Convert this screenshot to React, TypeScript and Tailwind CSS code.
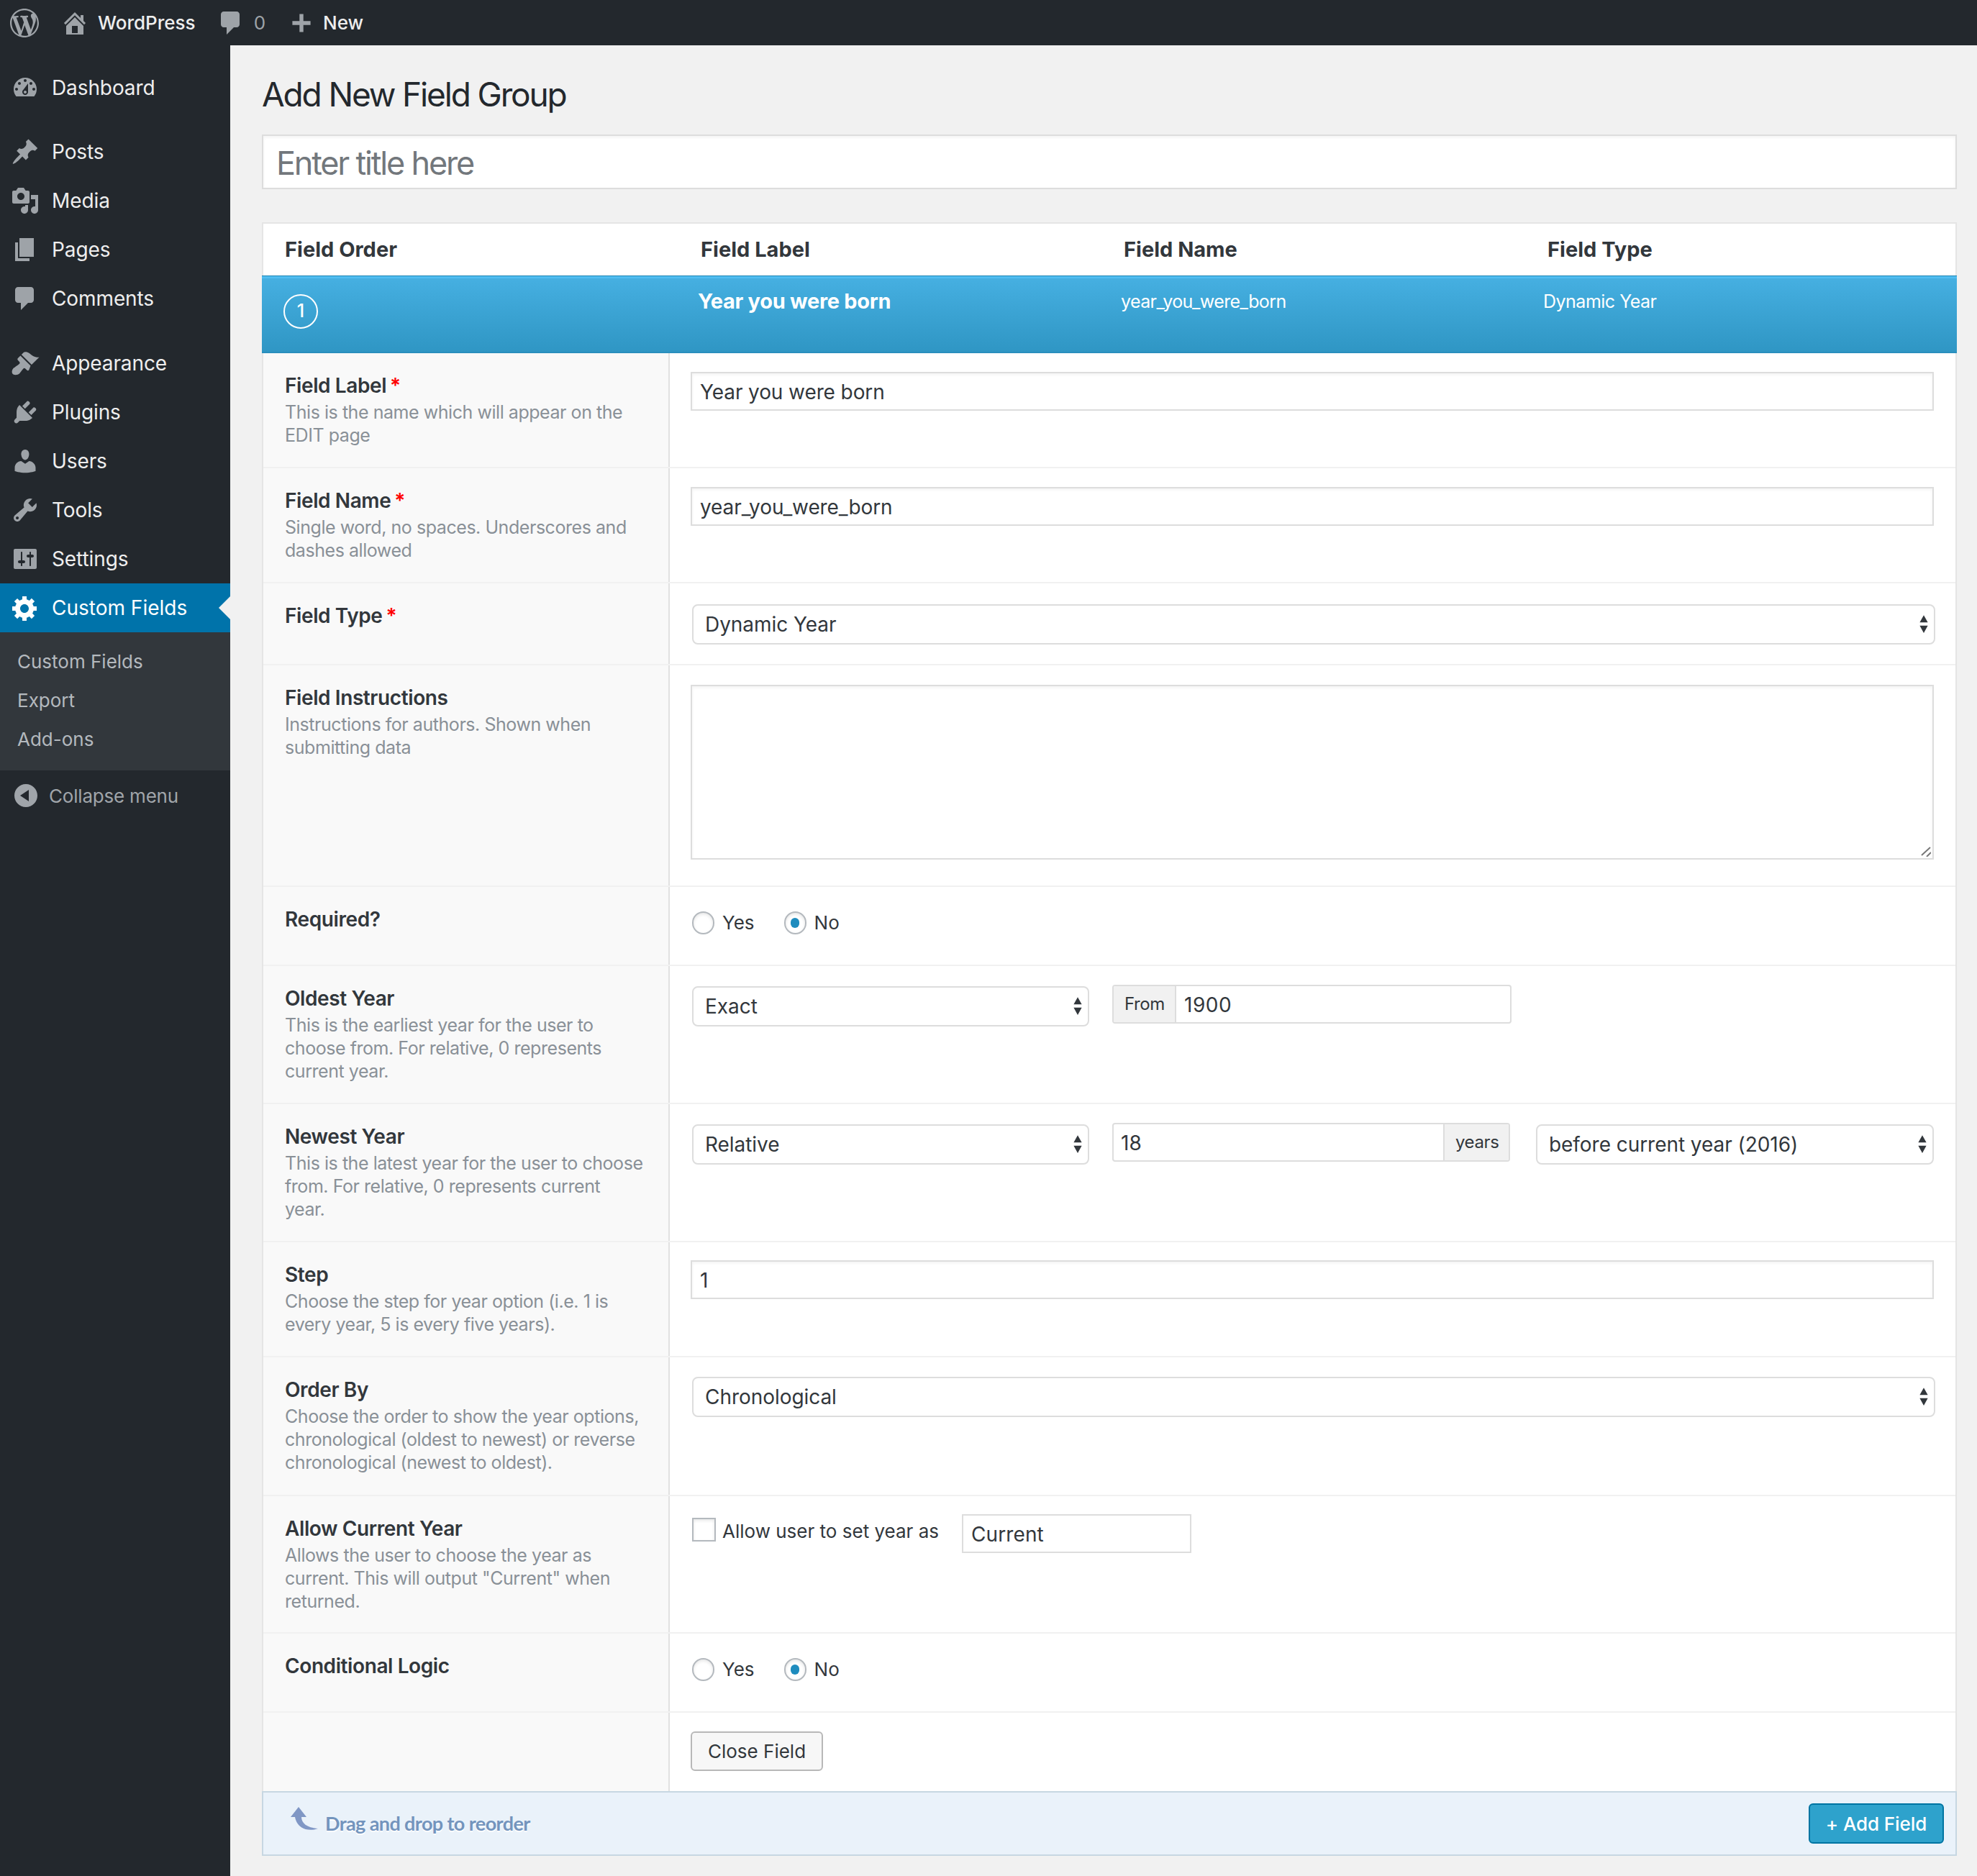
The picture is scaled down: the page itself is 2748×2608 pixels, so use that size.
import React from 'react';

const paths: Record<string, string> = {
  wordpress:
    'M20 10c0-5.51-4.49-10-10-10C4.48 0 0 4.49 0 10c0 5.52 4.48 10 10 10 5.51 0 10-4.48 10-10zM7.78 15.37L4.37 6.22c.55-.02 1.17-.08 1.17-.08.5-.06.44-1.13-.06-1.11 0 0-1.45.11-2.37.11-.18 0-.37 0-.58-.01C4.12 2.69 6.87 1.11 10 1.11c2.33 0 4.45.87 6.05 2.34-.68-.11-1.65.39-1.65 1.58 0 .74.45 1.36.9 2.1.35.61.55 1.36.55 2.46 0 1.49-1.4 5-1.4 5l-3.03-8.37c.54-.02.82-.17.82-.17.5-.05.44-1.25-.06-1.22 0 0-1.44.12-2.38.12-.87 0-2.33-.12-2.33-.12-.5-.03-.56 1.2-.06 1.22l.92.08 1.26 3.41zM17.41 10c.24-.64.74-1.87.43-4.25.7 1.29 1.05 2.71 1.05 4.25 0 3.29-1.73 6.24-4.4 7.78.97-2.59 1.94-5.2 2.92-7.78zM6.1 18.09C3.12 16.65 1.11 13.53 1.11 10c0-1.3.23-2.48.72-3.59C3.25 10.3 4.67 14.2 6.1 18.09zm4.03-6.63l2.58 6.98c-.86.29-1.76.45-2.71.45-.79 0-1.57-.11-2.29-.33.81-2.38 1.62-4.74 2.42-7.1z',
  home: 'M16 8.5l1.53 1.53-1.06 1.06L10 4.62l-6.47 6.47-1.06-1.06L10 2.5l4 4v-2h2v4zm-6-2.46l6 5.99V18H4v-5.97zM12 17v-5H8v5h4z',
  comment: 'M5 2h9c1.1 0 2 .9 2 2v7c0 1.1-.9 2-2 2h-2l-5 5v-5H5c-1.1 0-2-.9-2-2V4c0-1.1.9-2 2-2z',
  plus: 'M17 8.5v3h-5.5V17h-3v-5.5H3v-3h5.5V3h3v5.5H17z',
  dashboard:
    'M3.76 16h12.48c1.1-1.37 1.76-3.11 1.76-5 0-4.42-3.58-8-8-8s-8 3.58-8 8c0 1.89.66 3.63 1.76 5zM10 4c.55 0 1 .45 1 1s-.45 1-1 1-1-.45-1-1 .45-1 1-1zM6 6c.55 0 1 .45 1 1s-.45 1-1 1-1-.45-1-1 .45-1 1-1zm8 0c.55 0 1 .45 1 1s-.45 1-1 1-1-.45-1-1 .45-1 1-1zm-5.37 5.55L12 7v6c0 1.1-.9 2-2 2s-2-.9-2-2c0-.57.24-1.08.63-1.45zM4 10c.55 0 1 .45 1 1s-.45 1-1 1-1-.45-1-1 .45-1 1-1zm12 0c.55 0 1 .45 1 1s-.45 1-1 1-1-.45-1-1 .45-1 1-1zm-5 3c0-.55-.45-1-1-1s-1 .45-1 1 .45 1 1 1 1-.45 1-1z',
  pin: 'M10.44 3.02l1.82-1.82 6.36 6.35-1.83 1.82c-1.05-.68-2.48-.57-3.41.36l-.75.75c-.92.93-1.04 2.35-.35 3.41l-1.83 1.82-2.41-2.41-2.8 2.79c-.42.42-3.38 2.71-3.8 2.29s1.86-3.39 2.28-3.81l2.79-2.79L4.1 9.36l1.83-1.82c1.05.69 2.48.57 3.4-.36l.75-.75c.93-.92 1.05-2.35.36-3.41z',
  media:
    'M13 11V4c0-.55-.45-1-1-1h-1.67L9 1H5L3.67 3H2c-.55 0-1 .45-1 1v7c0 .55.45 1 1 1h10c.55 0 1-.45 1-1zM7 4.5c1.38 0 2.5 1.12 2.5 2.5S8.38 9.5 7 9.5 4.5 8.38 4.5 7 5.62 4.5 7 4.5zM14 6h5v10.5c0 1.38-1.12 2.5-2.5 2.5S14 17.88 14 16.5s1.12-2.5 2.5-2.5c.17 0 .34.02.5.05V9h-3V6zm-4 8.05V13h2v3.5c0 1.38-1.12 2.5-2.5 2.5S7 17.88 7 16.5 8.12 14 9.5 14c.17 0 .34.02.5.05z',
  pages: 'M6 15V2h10v13H6zm-1 1h8v2H3V5h2v11z',
  appearance:
    'M14.48 11.06L7.41 3.99l1.5-1.5c.5-.56 2.3-.47 3.51.32 1.21.8 1.43 1.28 2.91 2.1 1.18.64 2.45 1.26 4.45.85zm-.71.71L6.7 4.7 4.93 6.47c-.39.39-.39 1.02 0 1.41l1.06 1.06c.39.39.39 1.03 0 1.42-.6.6-1.43 1.11-2.21 1.69-.35.26-.7.53-1.01.84C1.43 13.23.28 15.7 1.09 17.1c.8 1.4 3.7 1.22 5.08-.16.31-.31.58-.66.85-1.01.57-.78 1.08-1.61 1.69-2.21.39-.39 1.02-.39 1.41 0l1.06 1.06c.39.39 1.02.39 1.41 0z',
  plugins:
    'M13.11 4.36L9.87 7.6 8 5.73l3.24-3.24c.35-.34 1.05-.2 1.56.32.52.51.66 1.21.31 1.55zm-8 1.77l.91-1.12 9.01 9.01-1.19.84c-.71.71-2.63 1.16-3.82 1.16H6.14L4.9 17.26c-.59.59-1.54.59-2.12 0-.59-.58-.59-1.53 0-2.12l1.24-1.24v-3.88c0-1.13.4-3.19 1.09-3.89zm7.26 3.97l3.24-3.24c.34-.35 1.04-.21 1.55.31.52.51.66 1.21.31 1.55l-3.24 3.25z',
  users:
    'M10 9.25c-2.27 0-2.73-3.44-2.73-3.44C7 4.02 7.82 2 9.97 2c2.16 0 2.98 2.02 2.71 3.81 0 0-.41 3.44-2.68 3.44zm0 2.57L12.72 10c2.39 0 4.52 2.33 4.52 4.53v2.49s-3.65 1.13-7.24 1.13c-3.65 0-7.24-1.13-7.24-1.13v-2.49c0-2.25 1.94-4.48 4.47-4.48z',
  tools:
    'M16.68 9.77c-1.34 1.34-3.3 1.67-4.95.99l-5.41 6.52c-.99.99-2.59.99-3.58 0s-.99-2.59 0-3.57l6.52-5.42c-.68-1.65-.35-3.61.99-4.95 1.28-1.28 3.12-1.62 4.72-1.06l-2.89 2.89 2.82 2.82 2.86-2.87c.53 1.58.18 3.39-1.08 4.69zM3.81 16.21c.4.39 1.04.39 1.43 0 .4-.4.4-1.04 0-1.43-.39-.4-1.03-.4-1.43 0-.39.39-.39 1.03 0 1.43z',
  settings:
    'M18 16V4c0-.55-.45-1-1-1H3c-.55 0-1 .45-1 1v12c0 .55.45 1 1 1h14c.55 0 1-.45 1-1zM8 11h1c.55 0 1 .45 1 1s-.45 1-1 1H8v1.5c0 .28-.22.5-.5.5s-.5-.22-.5-.5V13H6c-.55 0-1-.45-1-1s.45-1 1-1h1V5.5c0-.28.22-.5.5-.5s.5.22.5.5V11zm5-2h-1c-.55 0-1-.45-1-1s.45-1 1-1h1V5.5c0-.28.22-.5.5-.5s.5.22.5.5V7h1c.55 0 1 .45 1 1s-.45 1-1 1h-1v5.5c0 .28-.22.5-.5.5s-.5-.22-.5-.5V9z',
  gear: 'M18 12h-2.18c-.17.7-.44 1.35-.81 1.93l1.54 1.54-2.1 2.1-1.54-1.54c-.58.36-1.23.63-1.91.79V19H8v-2.18c-.68-.16-1.33-.43-1.91-.79l-1.54 1.54-2.12-2.12 1.54-1.54c-.36-.58-.63-1.23-.79-1.91H1V9.03h2.17c.16-.7.44-1.35.8-1.94L2.43 5.55l2.1-2.1 1.54 1.54c.58-.37 1.24-.64 1.93-.81V2h3v2.18c.68.16 1.33.43 1.91.79l1.54-1.54 2.12 2.12-1.54 1.54c.36.59.64 1.24.8 1.94H18V12zm-8.5 1.5c1.66 0 3-1.34 3-3s-1.34-3-3-3-3 1.34-3 3 1.34 3 3 3z',
  collapse: 'M18 10c0-4.42-3.58-8-8-8s-8 3.58-8 8 3.58 8 8 8 8-3.58 8-8zM12 6v8l-6-4z',
};

function Dash({ name, className }: { name: string; className: string }) {
  return (
    <svg viewBox="0 0 20 20" className={className} fill="currentColor">
      <path fillRule="evenodd" d={paths[name]} />
    </svg>
  );
}

function MenuItem({ icon, label }: { icon: string; label: string }) {
  return (
    <div className="flex items-center h-[68px] pl-[15px] text-[#eeeeee] text-[28px] tracking-[-0.1px]">
      <Dash name={icon} className="w-[40px] h-[40px] text-[#9ea3a8] mr-[17px] shrink-0" />
      {label}
    </div>
  );
}

function Sidebar() {
  return (
    <div className="w-[320px] shrink-0 bg-[#23282d] pt-[25px]">
      <MenuItem icon="dashboard" label="Dashboard" />
      <div className="h-[21px]" />
      <MenuItem icon="pin" label="Posts" />
      <MenuItem icon="media" label="Media" />
      <MenuItem icon="pages" label="Pages" />
      <MenuItem icon="comment" label="Comments" />
      <div className="h-[22px]" />
      <MenuItem icon="appearance" label="Appearance" />
      <MenuItem icon="plugins" label="Plugins" />
      <MenuItem icon="users" label="Users" />
      <MenuItem icon="tools" label="Tools" />
      <MenuItem icon="settings" label="Settings" />
      <div className="relative flex items-center h-[68px] pl-[15px] bg-[#0073aa] text-white text-[28px]">
        <Dash name="gear" className="w-[40px] h-[40px] text-white mr-[17px] shrink-0" />
        Custom Fields
        <div className="absolute right-0 top-[18px] w-0 h-0 border-y-[16px] border-y-transparent border-r-[16px] border-r-[#f1f1f1]" />
      </div>
      <div className="bg-[#32373c] pt-[13px] pb-[17px] text-[#b4b9be] text-[26px]">
        <div className="h-[54px] flex items-center pl-[24px]">Custom Fields</div>
        <div className="h-[54px] flex items-center pl-[24px]">Export</div>
        <div className="h-[54px] flex items-center pl-[24px]">Add-ons</div>
      </div>
      <div className="flex items-center h-[70px] pl-[16px] text-[#a0a5aa] text-[26px] tracking-[-0.2px]">
        <Dash name="collapse" className="w-[40px] h-[40px] text-[#a0a5aa] mr-[12px] shrink-0" />
        Collapse menu
      </div>
    </div>
  );
}

function TopBar() {
  return (
    <div className="h-[63px] bg-[#23282d] flex items-center text-[#eeeeee] text-[26px] font-medium shrink-0">
      <Dash name="wordpress" className="w-[40px] h-[40px] text-[#9ea3a8] ml-[14px] shrink-0" />
      <Dash name="home" className="w-[40px] h-[40px] text-[#9ea3a8] ml-[30px] shrink-0" />
      <span className="ml-[12px]">WordPress</span>
      <Dash name="comment" className="w-[40px] h-[40px] text-[#9ea3a8] ml-[29px] shrink-0" />
      <span className="ml-[12px] text-[#9ea3a8] font-normal">0</span>
      <Dash name="plus" className="w-[36px] h-[36px] text-[#9ea3a8] ml-[32px] shrink-0" />
      <span className="ml-[12px]">New</span>
    </div>
  );
}

function Arrows() {
  return (
    <svg viewBox="0 0 12 24" className="absolute right-[9px] top-[14px] w-[14px] h-[27px] text-[#32373c]" fill="currentColor">
      <path d="M6 1l5 9H1zM6 23l-5-9h10z" />
    </svg>
  );
}

function SelectBox({ value, className }: { value: string; className: string }) {
  return (
    <div className={`relative h-[56px] shrink-0 ${className}`}>
      <select
        defaultValue={value}
        className="w-full h-full appearance-none bg-white border-2 border-[#dddddd] rounded-[8px] pl-[16px] text-[28px] tracking-[-0.05px] text-[#32373c]"
      >
        <option>{value}</option>
      </select>
      <Arrows />
    </div>
  );
}

function TextInput({ value }: { value: string }) {
  return (
    <input
      type="text"
      defaultValue={value}
      className="w-full h-[54px] bg-white border-2 border-[#dddddd] shadow-[inset_0_2px_4px_rgba(0,0,0,0.05)] px-[11px] pt-[2px] text-[28px] tracking-[-0.1px] text-[#32373c] outline-none"
    />
  );
}

function Radio({ on, label }: { on?: boolean; label: string }) {
  return (
    <div className="flex items-center">
      <div className="w-[31px] h-[32px] rounded-full border-2 border-[#b4b9be] bg-white flex items-center justify-center shrink-0 shadow-[inset_0_2px_4px_rgba(0,0,0,0.1)]">
        {on && <div className="w-[12px] h-[14px] rounded-full bg-[#1e8cbe]" />}
      </div>
      <span className="ml-[11px] text-[26px] text-[#32373c]">{label}</span>
    </div>
  );
}

function YesNo() {
  return (
    <div className="flex items-center gap-[41px] ml-[2px]">
      <Radio label="Yes" />
      <Radio on label="No" />
    </div>
  );
}

function Row({
  height,
  label,
  required,
  desc,
  pad,
  children,
}: {
  height: string;
  label?: string;
  required?: boolean;
  desc?: string[];
  pad: string;
  children: React.ReactNode;
}) {
  return (
    <div className={`flex border-b-2 border-[#f1f1f1] ${height}`}>
      <div className="w-[565px] shrink-0 bg-[#f9f9f9] border-r-2 border-[#e1e1e1] pl-[30px] pt-[27px]">
        {label && (
          <div className="text-[28px] leading-[36px] font-semibold text-[#32373c] tracking-[-0.4px]">
            {label}
            {required && <span className="text-[#ff0000] ml-[5px]">*</span>}
          </div>
        )}
        {desc && (
          <div className="mt-[3px] text-[25px] leading-[32px] text-[#899097] tracking-[-0.45px]">
            {desc.map((line) => (
              <div key={line}>{line}</div>
            ))}
          </div>
        )}
      </div>
      <div className={`flex-1 min-w-0 bg-white pl-[29px] pr-[30px] ${pad}`}>{children}</div>
    </div>
  );
}

function FieldForm() {
  return (
    <div>
      <Row height="h-[160px]" pad="pt-[26px]" label="Field Label" required desc={['This is the name which will appear on the', 'EDIT page']}>
        <TextInput value="Year you were born" />
      </Row>
      <Row height="h-[160px]" pad="pt-[26px]" label="Field Name" required desc={['Single word, no spaces. Underscores and', 'dashes allowed']}>
        <TextInput value="year_you_were_born" />
      </Row>
      <Row height="h-[114px]" pad="pt-[29px]" label="Field Type" required>
        <SelectBox value="Dynamic Year" className="w-[1728px] ml-[2px]" />
      </Row>
      <Row height="h-[308px]" pad="pt-[27px]" label="Field Instructions" desc={['Instructions for authors. Shown when', 'submitting data']}>
        <div className="relative">
          <textarea className="block w-full h-[243px] resize-none bg-white border-2 border-[#dddddd] shadow-[inset_0_2px_4px_rgba(0,0,0,0.05)] outline-none" />
          <svg viewBox="0 0 14 14" className="absolute right-[4px] bottom-[4px] w-[14px] h-[14px]" stroke="#777777" strokeWidth="2" fill="none">
            <path d="M1 12L13 1M8 14l6-6" />
          </svg>
        </div>
      </Row>
      <Row height="h-[110px]" pad="pt-[30px]" label="Required?">
        <YesNo />
      </Row>
      <Row height="h-[192px]" pad="pt-[26px]" label="Oldest Year" desc={['This is the earliest year for the user to', 'choose from. For relative, 0 represents', 'current year.']}>
        <div className="flex items-start">
          <SelectBox value="Exact" className="w-[552px] ml-[2px] mt-[2px]" />
          <div className="flex h-[54px] w-[555px] ml-[32px] border-2 border-[#dddddd] rounded-[4px] bg-white text-[#32373c] overflow-hidden">
            <div className="w-[87px] bg-[#f1f1f1] border-r-2 border-[#dddddd] flex items-center pl-[15px] text-[24px] tracking-[-0.4px]">From</div>
            <div className="flex items-center pl-[11px] pt-[2px] text-[28px] tracking-[0.5px]">1900</div>
          </div>
        </div>
      </Row>
      <Row height="h-[192px]" pad="pt-[26px]" label="Newest Year" desc={['This is the latest year for the user to choose', 'from. For relative, 0 represents current', 'year.']}>
        <div className="flex items-start">
          <SelectBox value="Relative" className="w-[552px] ml-[2px] mt-[2px]" />
          <div className="flex h-[54px] w-[555px] ml-[32px] border-2 border-[#dddddd] rounded-[4px] bg-white text-[#32373c] overflow-hidden">
            <div className="flex-1 flex items-center pl-[10px] pt-[2px] text-[28px] tracking-[0.1px]">18</div>
            <div className="w-[91px] bg-[#f1f1f1] border-l-2 border-[#dddddd] flex items-center pl-[15px] text-[24px] tracking-[-0.4px]">years</div>
          </div>
          <SelectBox value="before current year (2016)" className="w-[553px] ml-[36px] mt-[2px]" />
        </div>
      </Row>
      <Row height="h-[160px]" pad="pt-[25px]" label="Step" desc={['Choose the step for year option (i.e. 1 is', 'every year, 5 is every five years).']}>
        <TextInput value="1" />
      </Row>
      <Row height="h-[193px]" pad="pt-[27px]" label="Order By" desc={['Choose the order to show the year options,', 'chronological (oldest to newest) or reverse', 'chronological (newest to oldest).']}>
        <SelectBox value="Chronological" className="w-[1728px] ml-[2px]" />
      </Row>
      <Row height="h-[191px]" pad="pt-[25px]" label="Allow Current Year" desc={['Allows the user to choose the year as', 'current. This will output "Current" when', 'returned.']}>
        <div className="flex items-start">
          <div className="w-[33px] h-[33px] mt-[5px] ml-[2px] border-2 border-[#b4b9be] bg-white shrink-0 shadow-[inset_0_2px_4px_rgba(0,0,0,0.1)]" />
          <span className="ml-[9px] mt-[4px] w-[333px] text-[26px] text-[#32373c]">Allow user to set year as</span>
          <input
            type="text"
            defaultValue="Current"
            className="w-[319px] h-[54px] bg-white border-2 border-[#dddddd] px-[11px] pt-[2px] text-[28px] tracking-[0.1px] text-[#32373c] outline-none"
          />
        </div>
      </Row>
      <Row height="h-[110px]" pad="pt-[30px]" label="Conditional Logic">
        <YesNo />
      </Row>
      <div className="flex h-[109px]">
        <div className="w-[565px] shrink-0 bg-[#f9f9f9] border-r-2 border-[#e1e1e1]" />
        <div className="flex-1 min-w-0 bg-white pl-[29px] pt-[26px]">
          <button className="w-[184px] h-[55px] bg-[#f7f7f7] border-2 border-[#b8b8b8] rounded-[6px] text-[26px] text-[#32373c]">Close Field</button>
        </div>
      </div>
    </div>
  );
}

export default function App() {
  return (
    <div className="flex flex-col w-full h-[2608px] bg-[#f1f1f1] font-[Inter,sans-serif] overflow-hidden">
      <TopBar />
      <div className="flex flex-1">
        <Sidebar />
        <div className="flex-1 min-w-0 pl-[44px] pr-[28px]">
          <h1 className="mt-[44px] text-[46px] leading-[48px] font-normal text-[#23282d] tracking-[-2.15px]">Add New Field Group</h1>
          <div className="mt-[32px] h-[76px] bg-white border-2 border-[#dddddd] shadow-[inset_0_2px_4px_rgba(0,0,0,0.05)] flex items-center pl-[18px] pt-[3px] text-[45px] tracking-[-2.2px] text-[#72777c]">Enter title here</div>
          <div className="mt-[46px] border-x-2 border-[#e5e5e5]">
            <div className="flex items-center h-[74px] border-t-2 border-[#e5e5e5] bg-white pl-[30px] text-[29px] font-bold text-[#32373c]">
              <div className="w-[578px]">Field Order</div>
              <div className="w-[588px]">Field Label</div>
              <div className="w-[589px]">Field Name</div>
              <div>Field Type</div>
            </div>
            <div className="flex h-[108px] -mx-[2px] border-t border-b-2 border-t-[#1a82b3] border-b-[#2a8fbd] bg-gradient-to-b from-[#46b0e2] to-[#2f96c4] shadow-[inset_0_3px_0_#50bdf0] text-white pl-[30px]">
              <div className="w-[576px] pt-[25px]">
                <div className="w-[48px] h-[48px] rounded-full border-2 border-white flex items-center justify-center text-[25px] font-medium">1</div>
              </div>
              <div className="w-[588px] pt-[17px] text-[29px] leading-[36px] font-bold tracking-[-0.3px]">Year you were born</div>
              <div className="w-[587px] pt-[17px] text-[25px] leading-[36px] tracking-[-0.6px]">year_you_were_born</div>
              <div className="pt-[17px] text-[25px] leading-[36px] tracking-[-0.5px]">Dynamic Year</div>
            </div>
            <FieldForm />
          </div>
          <div className="flex items-center justify-between h-[90px] bg-[#eaf2fa] border-2 border-[#c7d7e2] pl-[38px] pr-[16px]">
            <div className="flex items-center text-[#7394bd]">
              <svg viewBox="0 0 38 33" className="w-[38px] h-[33px] -mt-[14px]" fill="#8097c5">
                <path d="M11 0l11 14h-7c0 8 7 15 23 16-14 5-29 0-32-16H0z" />
              </svg>
              <span className="ml-[10px] text-[27px] font-[Lato,sans-serif] font-bold tracking-[-0.6px] [text-shadow:0_2px_0_#ffffff]">Drag and drop to reorder</span>
            </div>
            <button className="w-[188px] h-[56px] bg-[#2ea2cc] border-2 border-[#0074a2] rounded-[6px] text-[26px] font-medium text-white tracking-[-0.1px]">+ Add Field</button>
          </div>
        </div>
      </div>
    </div>
  );
}
